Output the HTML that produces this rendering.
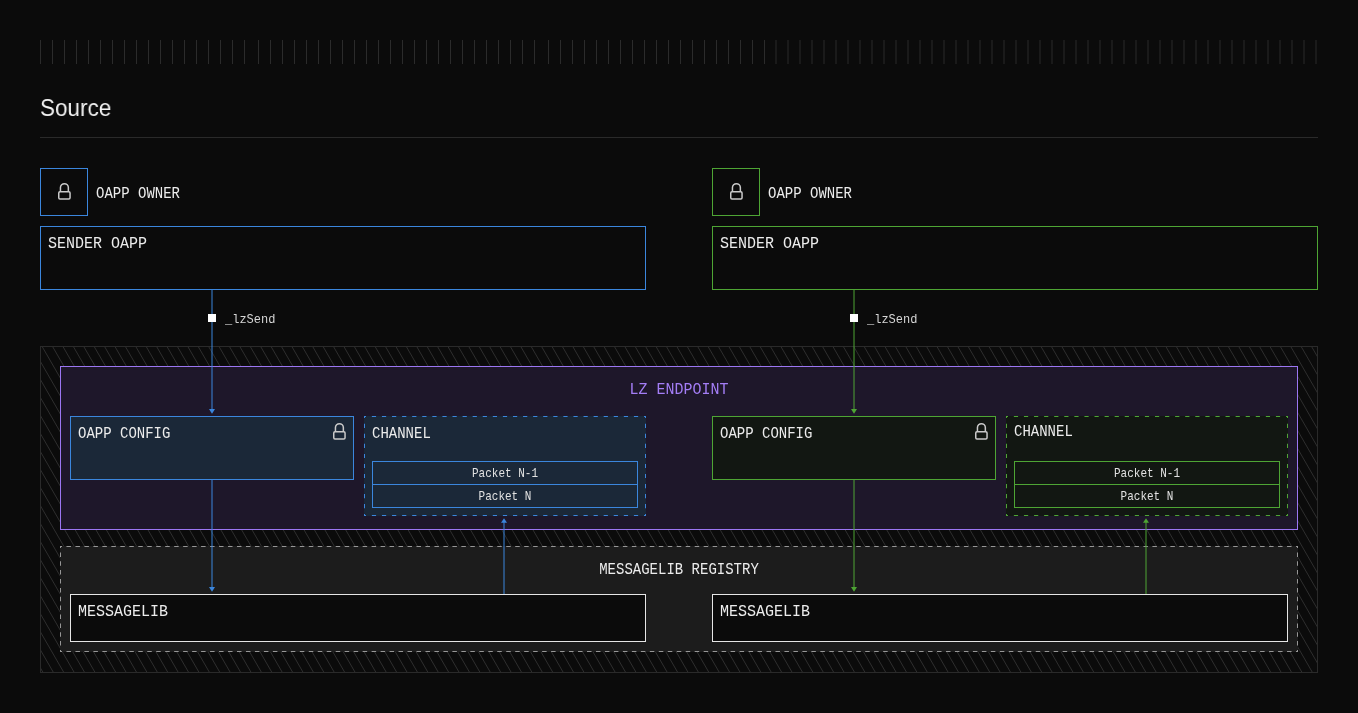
<!DOCTYPE html>
<html><head><meta charset="utf-8">
<style>
html,body{margin:0;padding:0;}
body{width:1358px;height:713px;background:#0b0b0b;position:relative;overflow:hidden;font-family:"Liberation Mono",monospace;color:#ececec;}
.abs{position:absolute;}
.t{position:absolute;white-space:pre;will-change:transform;}
.tk{position:absolute;top:40px;width:1px;height:24px;background:#252525;}
.box{position:absolute;box-sizing:border-box;border:1px solid;}
</style></head><body>
<svg class="abs" style="left:0;top:0" width="1358" height="70"><path d="M40 40h1v24h-1zM52 40h1v24h-1zM64 40h1v24h-1zM76 40h1v24h-1zM88 40h1v24h-1zM100 40h1v24h-1zM112 40h1v24h-1zM124 40h1v24h-1zM136 40h1v24h-1zM148 40h1v24h-1zM160 40h1v24h-1zM172 40h1v24h-1zM184 40h1v24h-1zM196 40h1v24h-1zM208 40h1v24h-1zM220 40h1v24h-1zM232 40h1v24h-1zM244 40h1v24h-1zM258 40h1v24h-1zM270 40h1v24h-1zM282 40h1v24h-1zM294 40h1v24h-1zM306 40h1v24h-1zM318 40h1v24h-1zM330 40h1v24h-1zM342 40h1v24h-1zM354 40h1v24h-1zM366 40h1v24h-1zM378 40h1v24h-1zM390 40h1v24h-1zM402 40h1v24h-1zM414 40h1v24h-1zM426 40h1v24h-1zM438 40h1v24h-1zM450 40h1v24h-1zM462 40h1v24h-1zM474 40h1v24h-1zM486 40h1v24h-1zM498 40h1v24h-1zM510 40h1v24h-1zM522 40h1v24h-1zM534 40h1v24h-1zM548 40h1v24h-1zM560 40h1v24h-1zM572 40h1v24h-1zM584 40h1v24h-1zM596 40h1v24h-1zM608 40h1v24h-1zM620 40h1v24h-1zM632 40h1v24h-1zM644 40h1v24h-1zM656 40h1v24h-1zM668 40h1v24h-1zM680 40h1v24h-1zM692 40h1v24h-1zM704 40h1v24h-1zM716 40h1v24h-1zM728 40h1v24h-1zM740 40h1v24h-1zM752 40h1v24h-1zM764 40h1v24h-1zM775.5 40h1v24h-1zM787.5 40h1v24h-1zM799.5 40h1v24h-1zM811.5 40h1v24h-1zM823.5 40h1v24h-1zM835.5 40h1v24h-1zM847.5 40h1v24h-1zM859.5 40h1v24h-1zM871.5 40h1v24h-1zM883.5 40h1v24h-1zM895.5 40h1v24h-1zM907.5 40h1v24h-1zM919.5 40h1v24h-1zM931.5 40h1v24h-1zM943.5 40h1v24h-1zM955.5 40h1v24h-1zM967.5 40h1v24h-1zM979.5 40h1v24h-1zM991.5 40h1v24h-1zM1003.5 40h1v24h-1zM1015.5 40h1v24h-1zM1027.5 40h1v24h-1zM1039.5 40h1v24h-1zM1051.5 40h1v24h-1zM1063.5 40h1v24h-1zM1075.5 40h1v24h-1zM1087.5 40h1v24h-1zM1099.5 40h1v24h-1zM1111.5 40h1v24h-1zM1123.5 40h1v24h-1zM1135.5 40h1v24h-1zM1147.5 40h1v24h-1zM1159.5 40h1v24h-1zM1171.5 40h1v24h-1zM1183.5 40h1v24h-1zM1195.5 40h1v24h-1zM1207.5 40h1v24h-1zM1219.5 40h1v24h-1zM1231.5 40h1v24h-1zM1243.5 40h1v24h-1zM1255.5 40h1v24h-1zM1267.5 40h1v24h-1zM1279.5 40h1v24h-1zM1291.5 40h1v24h-1zM1303.5 40h1v24h-1zM1315.5 40h1v24h-1z" fill="#2b2b2b"/></svg>
<div class="t" style="left:40px;top:93px;font-family:'Liberation Sans',sans-serif;font-size:24px;line-height:30px;color:#f2f2f2;transform:scaleX(0.937);transform-origin:0 0">Source</div>
<div class="abs" style="left:40px;top:137px;width:1278px;height:1px;background:#2a2a2a"></div>
<div class="box" style="left:40px;top:168px;width:48px;height:48px;border-color:#3b86dd"></div>
<svg class="abs" style="left:58.1px;top:191.2px;overflow:visible" width="13" height="9"><path d="M2.45 0.75V-3.4A3.95 3.95 0 0 1 10.35 -3.4V0.75" fill="none" stroke="#c9c9c9" stroke-width="1.5"/><rect x="0.75" y="0.75" width="11.3" height="7.3" rx="1.2" fill="none" stroke="#c9c9c9" stroke-width="1.5"/></svg>
<div class="t" style="left:96px;top:187.28px;font-size:14px;line-height:14px;transform:scaleY(1.16);transform-origin:0 10.72px;">OAPP OWNER</div>
<div class="box" style="left:40px;top:226px;width:606px;height:64px;border-color:#3b86dd"></div>
<div class="t" style="left:48px;top:236.51px;font-size:15px;line-height:15px;transform:scaleY(1.13);transform-origin:0 11.49px;">SENDER OAPP</div>
<div class="box" style="left:712px;top:168px;width:48px;height:48px;border-color:#4ea534"></div>
<svg class="abs" style="left:730.1px;top:191.2px;overflow:visible" width="13" height="9"><path d="M2.45 0.75V-3.4A3.95 3.95 0 0 1 10.35 -3.4V0.75" fill="none" stroke="#c9c9c9" stroke-width="1.5"/><rect x="0.75" y="0.75" width="11.3" height="7.3" rx="1.2" fill="none" stroke="#c9c9c9" stroke-width="1.5"/></svg>
<div class="t" style="left:768px;top:187.28px;font-size:14px;line-height:14px;transform:scaleY(1.16);transform-origin:0 10.72px;">OAPP OWNER</div>
<div class="box" style="left:712px;top:226px;width:606px;height:64px;border-color:#4ea534"></div>
<div class="t" style="left:720px;top:236.51px;font-size:15px;line-height:15px;transform:scaleY(1.13);transform-origin:0 11.49px;">SENDER OAPP</div>

<svg class="abs" style="left:40px;top:346px" width="1278" height="327" viewBox="0 0 1278 327">
<defs><clipPath id="hc"><rect x="0" y="0" width="1278" height="327"/></clipPath></defs>
<path d="M-206.26 0L-17.47 327M-195.85 0L-7.06 327M-185.45 0L3.34 327M-175.04 0L13.75 327M-164.64 0L24.15 327M-154.23 0L34.56 327M-143.83 0L44.96 327M-133.42 0L55.37 327M-123.02 0L65.77 327M-112.61 0L76.18 327M-102.21 0L86.58 327M-91.80 0L96.99 327M-81.40 0L107.39 327M-70.99 0L117.80 327M-60.59 0L128.20 327M-50.19 0L138.61 327M-39.78 0L149.01 327M-29.38 0L159.42 327M-18.97 0L169.82 327M-8.56 0L180.23 327M1.84 0L190.63 327M12.25 0L201.04 327M22.65 0L211.44 327M33.06 0L221.85 327M43.46 0L232.25 327M53.87 0L242.66 327M64.27 0L253.06 327M74.67 0L263.47 327M85.08 0L273.87 327M95.49 0L284.28 327M105.89 0L294.68 327M116.30 0L305.09 327M126.70 0L315.49 327M137.10 0L325.90 327M147.51 0L336.30 327M157.91 0L346.71 327M168.32 0L357.11 327M178.72 0L367.52 327M189.13 0L377.92 327M199.53 0L388.33 327M209.94 0L398.73 327M220.35 0L409.14 327M230.75 0L419.54 327M241.15 0L429.95 327M251.56 0L440.35 327M261.97 0L450.76 327M272.37 0L461.16 327M282.77 0L471.57 327M293.18 0L481.97 327M303.59 0L492.38 327M313.99 0L502.78 327M324.39 0L513.19 327M334.80 0L523.59 327M345.20 0L534.00 327M355.61 0L544.40 327M366.01 0L554.81 327M376.42 0L565.21 327M386.82 0L575.62 327M397.23 0L586.02 327M407.63 0L596.43 327M418.04 0L606.83 327M428.44 0L617.24 327M438.85 0L627.64 327M449.25 0L638.05 327M459.66 0L648.45 327M470.06 0L658.86 327M480.47 0L669.26 327M490.88 0L679.67 327M501.28 0L690.07 327M511.68 0L700.48 327M522.09 0L710.88 327M532.50 0L721.29 327M542.90 0L731.69 327M553.30 0L742.10 327M563.71 0L752.50 327M574.12 0L762.91 327M584.52 0L773.31 327M594.92 0L783.72 327M605.33 0L794.12 327M615.74 0L804.53 327M626.14 0L814.93 327M636.54 0L825.34 327M646.95 0L835.74 327M657.36 0L846.15 327M667.76 0L856.55 327M678.16 0L866.96 327M688.57 0L877.36 327M698.98 0L887.77 327M709.38 0L898.17 327M719.78 0L908.58 327M730.19 0L918.98 327M740.59 0L929.39 327M751.00 0L939.79 327M761.40 0L950.20 327M771.81 0L960.60 327M782.22 0L971.01 327M792.62 0L981.41 327M803.02 0L991.82 327M813.43 0L1002.22 327M823.83 0L1012.63 327M834.24 0L1023.03 327M844.64 0L1033.44 327M855.05 0L1043.84 327M865.45 0L1054.25 327M875.86 0L1064.65 327M886.26 0L1075.06 327M896.67 0L1085.46 327M907.07 0L1095.87 327M917.48 0L1106.27 327M927.88 0L1116.68 327M938.29 0L1127.08 327M948.69 0L1137.49 327M959.10 0L1147.89 327M969.50 0L1158.30 327M979.91 0L1168.70 327M990.32 0L1179.11 327M1000.72 0L1189.51 327M1011.12 0L1199.92 327M1021.53 0L1210.32 327M1031.94 0L1220.73 327M1042.34 0L1231.13 327M1052.75 0L1241.54 327M1063.15 0L1251.94 327M1073.56 0L1262.35 327M1083.96 0L1272.75 327M1094.37 0L1283.16 327M1104.77 0L1293.56 327M1115.18 0L1303.97 327M1125.58 0L1314.37 327M1135.99 0L1324.78 327M1146.39 0L1335.18 327M1156.80 0L1345.59 327M1167.20 0L1355.99 327M1177.61 0L1366.40 327M1188.01 0L1376.80 327M1198.41 0L1387.21 327M1208.82 0L1397.61 327M1219.23 0L1408.02 327M1229.63 0L1418.42 327M1240.04 0L1428.83 327M1250.44 0L1439.23 327M1260.85 0L1449.64 327M1271.25 0L1460.04 327M1281.65 0L1470.45 327M1292.06 0L1480.85 327" stroke="#2f2f2f" stroke-width="1" fill="none" clip-path="url(#hc)"/>
<rect x="0.5" y="0.5" width="1277" height="326" fill="none" stroke="#2a2a2a"/>
</svg>

<div class="box" style="left:60px;top:366px;width:1238px;height:164px;border-color:#9b76f2;background:#1e172a"></div>
<div class="t" style="left:60px;width:1238px;text-align:center;top:382.51px;font-size:15px;line-height:15px;transform:scaleY(1.13);transform-origin:50% 11.49px;color:#a47ef6;">LZ ENDPOINT</div>
<div class="box" style="left:70px;top:416px;width:284px;height:64px;border-color:#3b86dd;background:#1b2838"></div>
<div class="t" style="left:78px;top:427.28px;font-size:14px;line-height:14px;transform:scaleY(1.16);transform-origin:0 10.72px;">OAPP CONFIG</div>
<svg class="abs" style="left:333.1px;top:431.2px;overflow:visible" width="13" height="9"><path d="M2.45 0.75V-3.4A3.95 3.95 0 0 1 10.35 -3.4V0.75" fill="none" stroke="#c9c9c9" stroke-width="1.5"/><rect x="0.75" y="0.75" width="11.3" height="7.3" rx="1.2" fill="none" stroke="#c9c9c9" stroke-width="1.5"/></svg>
<div class="box" style="left:364px;top:416px;width:282px;height:100px;border:0;background:#1b2838"></div>
<svg class="abs" style="left:0;top:0;overflow:visible" width="1" height="1"><path d="M364 416h2v1h-1v1h-1zM646 416h-2v1h1v1h1zM364 516h2v-1h-1v-1h-1zM646 516h-2v-1h1v-1h1zM371.88 416h4.2v1h-4.2zM371.88 515h4.2v1h-4.2zM381.96 416h4.2v1h-4.2zM381.96 515h4.2v1h-4.2zM392.04 416h4.2v1h-4.2zM392.04 515h4.2v1h-4.2zM402.11 416h4.2v1h-4.2zM402.11 515h4.2v1h-4.2zM412.19 416h4.2v1h-4.2zM412.19 515h4.2v1h-4.2zM422.27 416h4.2v1h-4.2zM422.27 515h4.2v1h-4.2zM432.35 416h4.2v1h-4.2zM432.35 515h4.2v1h-4.2zM442.43 416h4.2v1h-4.2zM442.43 515h4.2v1h-4.2zM452.51 416h4.2v1h-4.2zM452.51 515h4.2v1h-4.2zM462.59 416h4.2v1h-4.2zM462.59 515h4.2v1h-4.2zM472.66 416h4.2v1h-4.2zM472.66 515h4.2v1h-4.2zM482.74 416h4.2v1h-4.2zM482.74 515h4.2v1h-4.2zM492.82 416h4.2v1h-4.2zM492.82 515h4.2v1h-4.2zM502.90 416h4.2v1h-4.2zM502.90 515h4.2v1h-4.2zM512.98 416h4.2v1h-4.2zM512.98 515h4.2v1h-4.2zM523.06 416h4.2v1h-4.2zM523.06 515h4.2v1h-4.2zM533.14 416h4.2v1h-4.2zM533.14 515h4.2v1h-4.2zM543.21 416h4.2v1h-4.2zM543.21 515h4.2v1h-4.2zM553.29 416h4.2v1h-4.2zM553.29 515h4.2v1h-4.2zM563.37 416h4.2v1h-4.2zM563.37 515h4.2v1h-4.2zM573.45 416h4.2v1h-4.2zM573.45 515h4.2v1h-4.2zM583.53 416h4.2v1h-4.2zM583.53 515h4.2v1h-4.2zM593.61 416h4.2v1h-4.2zM593.61 515h4.2v1h-4.2zM603.69 416h4.2v1h-4.2zM603.69 515h4.2v1h-4.2zM613.76 416h4.2v1h-4.2zM613.76 515h4.2v1h-4.2zM623.84 416h4.2v1h-4.2zM623.84 515h4.2v1h-4.2zM633.92 416h4.2v1h-4.2zM633.92 515h4.2v1h-4.2zM364 423.82h1v4.2h-1zM645 423.82h1v4.2h-1zM364 433.84h1v4.2h-1zM645 433.84h1v4.2h-1zM364 443.86h1v4.2h-1zM645 443.86h1v4.2h-1zM364 453.88h1v4.2h-1zM645 453.88h1v4.2h-1zM364 463.90h1v4.2h-1zM645 463.90h1v4.2h-1zM364 473.92h1v4.2h-1zM645 473.92h1v4.2h-1zM364 483.94h1v4.2h-1zM645 483.94h1v4.2h-1zM364 493.96h1v4.2h-1zM645 493.96h1v4.2h-1zM364 503.98h1v4.2h-1zM645 503.98h1v4.2h-1z" fill="#3b86dd"/></svg>
<div class="t" style="left:372px;top:427.28px;font-size:14px;line-height:14px;transform:scaleY(1.16);transform-origin:0 10.72px;">CHANNEL</div>
<div class="box" style="left:372px;top:461px;width:266px;height:24px;border-color:#3b86dd"></div>
<div class="box" style="left:372px;top:484px;width:266px;height:24px;border-color:#3b86dd"></div>
<div class="t" style="left:372px;width:266px;text-align:center;top:468.87px;font-size:11px;line-height:11px;transform:scaleY(1.16);transform-origin:50% 8.43px;color:#e2e2e2;">Packet N-1</div>
<div class="t" style="left:372px;width:266px;text-align:center;top:491.87px;font-size:11px;line-height:11px;transform:scaleY(1.16);transform-origin:50% 8.43px;color:#e2e2e2;">Packet N</div>
<div class="box" style="left:712px;top:416px;width:284px;height:64px;border-color:#4ea534;background:#121712"></div>
<div class="t" style="left:720px;top:427.28px;font-size:14px;line-height:14px;transform:scaleY(1.16);transform-origin:0 10.72px;">OAPP CONFIG</div>
<svg class="abs" style="left:975.1px;top:431.2px;overflow:visible" width="13" height="9"><path d="M2.45 0.75V-3.4A3.95 3.95 0 0 1 10.35 -3.4V0.75" fill="none" stroke="#c9c9c9" stroke-width="1.5"/><rect x="0.75" y="0.75" width="11.3" height="7.3" rx="1.2" fill="none" stroke="#c9c9c9" stroke-width="1.5"/></svg>
<div class="box" style="left:1006px;top:416px;width:282px;height:100px;border:0;background:#121712"></div>
<svg class="abs" style="left:0;top:0;overflow:visible" width="1" height="1"><path d="M1006 416h2v1h-1v1h-1zM1288 416h-2v1h1v1h1zM1006 516h2v-1h-1v-1h-1zM1288 516h-2v-1h1v-1h1zM1013.88 416h4.2v1h-4.2zM1013.88 515h4.2v1h-4.2zM1023.96 416h4.2v1h-4.2zM1023.96 515h4.2v1h-4.2zM1034.04 416h4.2v1h-4.2zM1034.04 515h4.2v1h-4.2zM1044.11 416h4.2v1h-4.2zM1044.11 515h4.2v1h-4.2zM1054.19 416h4.2v1h-4.2zM1054.19 515h4.2v1h-4.2zM1064.27 416h4.2v1h-4.2zM1064.27 515h4.2v1h-4.2zM1074.35 416h4.2v1h-4.2zM1074.35 515h4.2v1h-4.2zM1084.43 416h4.2v1h-4.2zM1084.43 515h4.2v1h-4.2zM1094.51 416h4.2v1h-4.2zM1094.51 515h4.2v1h-4.2zM1104.59 416h4.2v1h-4.2zM1104.59 515h4.2v1h-4.2zM1114.66 416h4.2v1h-4.2zM1114.66 515h4.2v1h-4.2zM1124.74 416h4.2v1h-4.2zM1124.74 515h4.2v1h-4.2zM1134.82 416h4.2v1h-4.2zM1134.82 515h4.2v1h-4.2zM1144.90 416h4.2v1h-4.2zM1144.90 515h4.2v1h-4.2zM1154.98 416h4.2v1h-4.2zM1154.98 515h4.2v1h-4.2zM1165.06 416h4.2v1h-4.2zM1165.06 515h4.2v1h-4.2zM1175.14 416h4.2v1h-4.2zM1175.14 515h4.2v1h-4.2zM1185.21 416h4.2v1h-4.2zM1185.21 515h4.2v1h-4.2zM1195.29 416h4.2v1h-4.2zM1195.29 515h4.2v1h-4.2zM1205.37 416h4.2v1h-4.2zM1205.37 515h4.2v1h-4.2zM1215.45 416h4.2v1h-4.2zM1215.45 515h4.2v1h-4.2zM1225.53 416h4.2v1h-4.2zM1225.53 515h4.2v1h-4.2zM1235.61 416h4.2v1h-4.2zM1235.61 515h4.2v1h-4.2zM1245.69 416h4.2v1h-4.2zM1245.69 515h4.2v1h-4.2zM1255.76 416h4.2v1h-4.2zM1255.76 515h4.2v1h-4.2zM1265.84 416h4.2v1h-4.2zM1265.84 515h4.2v1h-4.2zM1275.92 416h4.2v1h-4.2zM1275.92 515h4.2v1h-4.2zM1006 423.82h1v4.2h-1zM1287 423.82h1v4.2h-1zM1006 433.84h1v4.2h-1zM1287 433.84h1v4.2h-1zM1006 443.86h1v4.2h-1zM1287 443.86h1v4.2h-1zM1006 453.88h1v4.2h-1zM1287 453.88h1v4.2h-1zM1006 463.90h1v4.2h-1zM1287 463.90h1v4.2h-1zM1006 473.92h1v4.2h-1zM1287 473.92h1v4.2h-1zM1006 483.94h1v4.2h-1zM1287 483.94h1v4.2h-1zM1006 493.96h1v4.2h-1zM1287 493.96h1v4.2h-1zM1006 503.98h1v4.2h-1zM1287 503.98h1v4.2h-1z" fill="#4ea534"/></svg>
<div class="t" style="left:1014px;top:425.28px;font-size:14px;line-height:14px;transform:scaleY(1.16);transform-origin:0 10.72px;">CHANNEL</div>
<div class="box" style="left:1014px;top:461px;width:266px;height:24px;border-color:#4ea534"></div>
<div class="box" style="left:1014px;top:484px;width:266px;height:24px;border-color:#4ea534"></div>
<div class="t" style="left:1014px;width:266px;text-align:center;top:468.87px;font-size:11px;line-height:11px;transform:scaleY(1.16);transform-origin:50% 8.43px;color:#e2e2e2;">Packet N-1</div>
<div class="t" style="left:1014px;width:266px;text-align:center;top:491.87px;font-size:11px;line-height:11px;transform:scaleY(1.16);transform-origin:50% 8.43px;color:#e2e2e2;">Packet N</div>

<div class="box" style="left:60px;top:546px;width:1238px;height:106px;border:0;background:#1c1c1c"></div>
<svg class="abs" style="left:0;top:0;overflow:visible" width="1" height="1"><path d="M60 546h2v1h-1v1h-1zM1298 546h-2v1h1v1h1zM60 652h2v-1h-1v-1h-1zM1298 652h-2v-1h1v-1h1zM66.47 546h4.5v1h-4.5zM66.47 651h4.5v1h-4.5zM75.45 546h4.5v1h-4.5zM75.45 651h4.5v1h-4.5zM84.42 546h4.5v1h-4.5zM84.42 651h4.5v1h-4.5zM93.40 546h4.5v1h-4.5zM93.40 651h4.5v1h-4.5zM102.37 546h4.5v1h-4.5zM102.37 651h4.5v1h-4.5zM111.35 546h4.5v1h-4.5zM111.35 651h4.5v1h-4.5zM120.32 546h4.5v1h-4.5zM120.32 651h4.5v1h-4.5zM129.30 546h4.5v1h-4.5zM129.30 651h4.5v1h-4.5zM138.27 546h4.5v1h-4.5zM138.27 651h4.5v1h-4.5zM147.25 546h4.5v1h-4.5zM147.25 651h4.5v1h-4.5zM156.22 546h4.5v1h-4.5zM156.22 651h4.5v1h-4.5zM165.20 546h4.5v1h-4.5zM165.20 651h4.5v1h-4.5zM174.17 546h4.5v1h-4.5zM174.17 651h4.5v1h-4.5zM183.14 546h4.5v1h-4.5zM183.14 651h4.5v1h-4.5zM192.12 546h4.5v1h-4.5zM192.12 651h4.5v1h-4.5zM201.09 546h4.5v1h-4.5zM201.09 651h4.5v1h-4.5zM210.07 546h4.5v1h-4.5zM210.07 651h4.5v1h-4.5zM219.04 546h4.5v1h-4.5zM219.04 651h4.5v1h-4.5zM228.02 546h4.5v1h-4.5zM228.02 651h4.5v1h-4.5zM236.99 546h4.5v1h-4.5zM236.99 651h4.5v1h-4.5zM245.97 546h4.5v1h-4.5zM245.97 651h4.5v1h-4.5zM254.94 546h4.5v1h-4.5zM254.94 651h4.5v1h-4.5zM263.92 546h4.5v1h-4.5zM263.92 651h4.5v1h-4.5zM272.89 546h4.5v1h-4.5zM272.89 651h4.5v1h-4.5zM281.87 546h4.5v1h-4.5zM281.87 651h4.5v1h-4.5zM290.84 546h4.5v1h-4.5zM290.84 651h4.5v1h-4.5zM299.82 546h4.5v1h-4.5zM299.82 651h4.5v1h-4.5zM308.79 546h4.5v1h-4.5zM308.79 651h4.5v1h-4.5zM317.76 546h4.5v1h-4.5zM317.76 651h4.5v1h-4.5zM326.74 546h4.5v1h-4.5zM326.74 651h4.5v1h-4.5zM335.71 546h4.5v1h-4.5zM335.71 651h4.5v1h-4.5zM344.69 546h4.5v1h-4.5zM344.69 651h4.5v1h-4.5zM353.66 546h4.5v1h-4.5zM353.66 651h4.5v1h-4.5zM362.64 546h4.5v1h-4.5zM362.64 651h4.5v1h-4.5zM371.61 546h4.5v1h-4.5zM371.61 651h4.5v1h-4.5zM380.59 546h4.5v1h-4.5zM380.59 651h4.5v1h-4.5zM389.56 546h4.5v1h-4.5zM389.56 651h4.5v1h-4.5zM398.54 546h4.5v1h-4.5zM398.54 651h4.5v1h-4.5zM407.51 546h4.5v1h-4.5zM407.51 651h4.5v1h-4.5zM416.49 546h4.5v1h-4.5zM416.49 651h4.5v1h-4.5zM425.46 546h4.5v1h-4.5zM425.46 651h4.5v1h-4.5zM434.43 546h4.5v1h-4.5zM434.43 651h4.5v1h-4.5zM443.41 546h4.5v1h-4.5zM443.41 651h4.5v1h-4.5zM452.38 546h4.5v1h-4.5zM452.38 651h4.5v1h-4.5zM461.36 546h4.5v1h-4.5zM461.36 651h4.5v1h-4.5zM470.33 546h4.5v1h-4.5zM470.33 651h4.5v1h-4.5zM479.31 546h4.5v1h-4.5zM479.31 651h4.5v1h-4.5zM488.28 546h4.5v1h-4.5zM488.28 651h4.5v1h-4.5zM497.26 546h4.5v1h-4.5zM497.26 651h4.5v1h-4.5zM506.23 546h4.5v1h-4.5zM506.23 651h4.5v1h-4.5zM515.21 546h4.5v1h-4.5zM515.21 651h4.5v1h-4.5zM524.18 546h4.5v1h-4.5zM524.18 651h4.5v1h-4.5zM533.16 546h4.5v1h-4.5zM533.16 651h4.5v1h-4.5zM542.13 546h4.5v1h-4.5zM542.13 651h4.5v1h-4.5zM551.11 546h4.5v1h-4.5zM551.11 651h4.5v1h-4.5zM560.08 546h4.5v1h-4.5zM560.08 651h4.5v1h-4.5zM569.05 546h4.5v1h-4.5zM569.05 651h4.5v1h-4.5zM578.03 546h4.5v1h-4.5zM578.03 651h4.5v1h-4.5zM587.00 546h4.5v1h-4.5zM587.00 651h4.5v1h-4.5zM595.98 546h4.5v1h-4.5zM595.98 651h4.5v1h-4.5zM604.95 546h4.5v1h-4.5zM604.95 651h4.5v1h-4.5zM613.93 546h4.5v1h-4.5zM613.93 651h4.5v1h-4.5zM622.90 546h4.5v1h-4.5zM622.90 651h4.5v1h-4.5zM631.88 546h4.5v1h-4.5zM631.88 651h4.5v1h-4.5zM640.85 546h4.5v1h-4.5zM640.85 651h4.5v1h-4.5zM649.83 546h4.5v1h-4.5zM649.83 651h4.5v1h-4.5zM658.80 546h4.5v1h-4.5zM658.80 651h4.5v1h-4.5zM667.78 546h4.5v1h-4.5zM667.78 651h4.5v1h-4.5zM676.75 546h4.5v1h-4.5zM676.75 651h4.5v1h-4.5zM685.72 546h4.5v1h-4.5zM685.72 651h4.5v1h-4.5zM694.70 546h4.5v1h-4.5zM694.70 651h4.5v1h-4.5zM703.67 546h4.5v1h-4.5zM703.67 651h4.5v1h-4.5zM712.65 546h4.5v1h-4.5zM712.65 651h4.5v1h-4.5zM721.62 546h4.5v1h-4.5zM721.62 651h4.5v1h-4.5zM730.60 546h4.5v1h-4.5zM730.60 651h4.5v1h-4.5zM739.57 546h4.5v1h-4.5zM739.57 651h4.5v1h-4.5zM748.55 546h4.5v1h-4.5zM748.55 651h4.5v1h-4.5zM757.52 546h4.5v1h-4.5zM757.52 651h4.5v1h-4.5zM766.50 546h4.5v1h-4.5zM766.50 651h4.5v1h-4.5zM775.47 546h4.5v1h-4.5zM775.47 651h4.5v1h-4.5zM784.45 546h4.5v1h-4.5zM784.45 651h4.5v1h-4.5zM793.42 546h4.5v1h-4.5zM793.42 651h4.5v1h-4.5zM802.39 546h4.5v1h-4.5zM802.39 651h4.5v1h-4.5zM811.37 546h4.5v1h-4.5zM811.37 651h4.5v1h-4.5zM820.34 546h4.5v1h-4.5zM820.34 651h4.5v1h-4.5zM829.32 546h4.5v1h-4.5zM829.32 651h4.5v1h-4.5zM838.29 546h4.5v1h-4.5zM838.29 651h4.5v1h-4.5zM847.27 546h4.5v1h-4.5zM847.27 651h4.5v1h-4.5zM856.24 546h4.5v1h-4.5zM856.24 651h4.5v1h-4.5zM865.22 546h4.5v1h-4.5zM865.22 651h4.5v1h-4.5zM874.19 546h4.5v1h-4.5zM874.19 651h4.5v1h-4.5zM883.17 546h4.5v1h-4.5zM883.17 651h4.5v1h-4.5zM892.14 546h4.5v1h-4.5zM892.14 651h4.5v1h-4.5zM901.12 546h4.5v1h-4.5zM901.12 651h4.5v1h-4.5zM910.09 546h4.5v1h-4.5zM910.09 651h4.5v1h-4.5zM919.07 546h4.5v1h-4.5zM919.07 651h4.5v1h-4.5zM928.04 546h4.5v1h-4.5zM928.04 651h4.5v1h-4.5zM937.01 546h4.5v1h-4.5zM937.01 651h4.5v1h-4.5zM945.99 546h4.5v1h-4.5zM945.99 651h4.5v1h-4.5zM954.96 546h4.5v1h-4.5zM954.96 651h4.5v1h-4.5zM963.94 546h4.5v1h-4.5zM963.94 651h4.5v1h-4.5zM972.91 546h4.5v1h-4.5zM972.91 651h4.5v1h-4.5zM981.89 546h4.5v1h-4.5zM981.89 651h4.5v1h-4.5zM990.86 546h4.5v1h-4.5zM990.86 651h4.5v1h-4.5zM999.84 546h4.5v1h-4.5zM999.84 651h4.5v1h-4.5zM1008.81 546h4.5v1h-4.5zM1008.81 651h4.5v1h-4.5zM1017.79 546h4.5v1h-4.5zM1017.79 651h4.5v1h-4.5zM1026.76 546h4.5v1h-4.5zM1026.76 651h4.5v1h-4.5zM1035.74 546h4.5v1h-4.5zM1035.74 651h4.5v1h-4.5zM1044.71 546h4.5v1h-4.5zM1044.71 651h4.5v1h-4.5zM1053.68 546h4.5v1h-4.5zM1053.68 651h4.5v1h-4.5zM1062.66 546h4.5v1h-4.5zM1062.66 651h4.5v1h-4.5zM1071.63 546h4.5v1h-4.5zM1071.63 651h4.5v1h-4.5zM1080.61 546h4.5v1h-4.5zM1080.61 651h4.5v1h-4.5zM1089.58 546h4.5v1h-4.5zM1089.58 651h4.5v1h-4.5zM1098.56 546h4.5v1h-4.5zM1098.56 651h4.5v1h-4.5zM1107.53 546h4.5v1h-4.5zM1107.53 651h4.5v1h-4.5zM1116.51 546h4.5v1h-4.5zM1116.51 651h4.5v1h-4.5zM1125.48 546h4.5v1h-4.5zM1125.48 651h4.5v1h-4.5zM1134.46 546h4.5v1h-4.5zM1134.46 651h4.5v1h-4.5zM1143.43 546h4.5v1h-4.5zM1143.43 651h4.5v1h-4.5zM1152.41 546h4.5v1h-4.5zM1152.41 651h4.5v1h-4.5zM1161.38 546h4.5v1h-4.5zM1161.38 651h4.5v1h-4.5zM1170.36 546h4.5v1h-4.5zM1170.36 651h4.5v1h-4.5zM1179.33 546h4.5v1h-4.5zM1179.33 651h4.5v1h-4.5zM1188.30 546h4.5v1h-4.5zM1188.30 651h4.5v1h-4.5zM1197.28 546h4.5v1h-4.5zM1197.28 651h4.5v1h-4.5zM1206.25 546h4.5v1h-4.5zM1206.25 651h4.5v1h-4.5zM1215.23 546h4.5v1h-4.5zM1215.23 651h4.5v1h-4.5zM1224.20 546h4.5v1h-4.5zM1224.20 651h4.5v1h-4.5zM1233.18 546h4.5v1h-4.5zM1233.18 651h4.5v1h-4.5zM1242.15 546h4.5v1h-4.5zM1242.15 651h4.5v1h-4.5zM1251.13 546h4.5v1h-4.5zM1251.13 651h4.5v1h-4.5zM1260.10 546h4.5v1h-4.5zM1260.10 651h4.5v1h-4.5zM1269.08 546h4.5v1h-4.5zM1269.08 651h4.5v1h-4.5zM1278.05 546h4.5v1h-4.5zM1278.05 651h4.5v1h-4.5zM1287.03 546h4.5v1h-4.5zM1287.03 651h4.5v1h-4.5zM60 552.38h1v4.5h-1zM1297 552.38h1v4.5h-1zM60 561.25h1v4.5h-1zM1297 561.25h1v4.5h-1zM60 570.12h1v4.5h-1zM1297 570.12h1v4.5h-1zM60 579.00h1v4.5h-1zM1297 579.00h1v4.5h-1zM60 587.88h1v4.5h-1zM1297 587.88h1v4.5h-1zM60 596.75h1v4.5h-1zM1297 596.75h1v4.5h-1zM60 605.62h1v4.5h-1zM1297 605.62h1v4.5h-1zM60 614.50h1v4.5h-1zM1297 614.50h1v4.5h-1zM60 623.38h1v4.5h-1zM1297 623.38h1v4.5h-1zM60 632.25h1v4.5h-1zM1297 632.25h1v4.5h-1zM60 641.12h1v4.5h-1zM1297 641.12h1v4.5h-1z" fill="#979797"/></svg>
<div class="t" style="left:60px;width:1238px;text-align:center;top:562.88px;font-size:14px;line-height:14px;transform:scaleY(1.16);transform-origin:50% 10.72px;">MESSAGELIB REGISTRY</div>
<div class="box" style="left:70px;top:594px;width:576px;height:48px;border-color:#e6e6e6;background:#0b0b0b"></div>
<div class="t" style="left:78px;top:604.51px;font-size:15px;line-height:15px;transform:scaleY(1.13);transform-origin:0 11.49px;">MESSAGELIB</div>
<div class="box" style="left:712px;top:594px;width:576px;height:48px;border-color:#e6e6e6;background:#0b0b0b"></div>
<div class="t" style="left:720px;top:604.51px;font-size:15px;line-height:15px;transform:scaleY(1.13);transform-origin:0 11.49px;">MESSAGELIB</div>

<svg class="abs" style="left:0;top:0" width="1358" height="713" viewBox="0 0 1358 713">
<g stroke="#3b86dd" stroke-width="1" fill="none">
<path d="M212 290V410M212 480V588M504 594V522"/>
</g>
<g fill="#3b86dd">
<path d="M209 409H215L212 413.7Z"/><path d="M209 587H215L212 591.7Z"/><path d="M501 522.8H507L504 518.3Z"/>
</g>
<g stroke="#4ea534" stroke-width="1" fill="none">
<path d="M854 290V410M854 480V588M1146 594V522"/>
</g>
<g fill="#4ea534">
<path d="M851 409H857L854 413.7Z"/><path d="M851 587H857L854 591.7Z"/><path d="M1143 522.8H1149L1146 518.3Z"/>
</g>
<rect x="208" y="314" width="8" height="8" fill="#fff"/>
<rect x="850" y="314" width="8" height="8" fill="#fff"/>
</svg>
<div class="t" style="left:225px;top:313.81px;font-size:12px;line-height:12px;transform:scaleY(1.14);transform-origin:0 9.19px;color:#d6d6d6;">_lzSend</div>
<div class="t" style="left:867px;top:313.81px;font-size:12px;line-height:12px;transform:scaleY(1.14);transform-origin:0 9.19px;color:#d6d6d6;">_lzSend</div>
</body></html>
